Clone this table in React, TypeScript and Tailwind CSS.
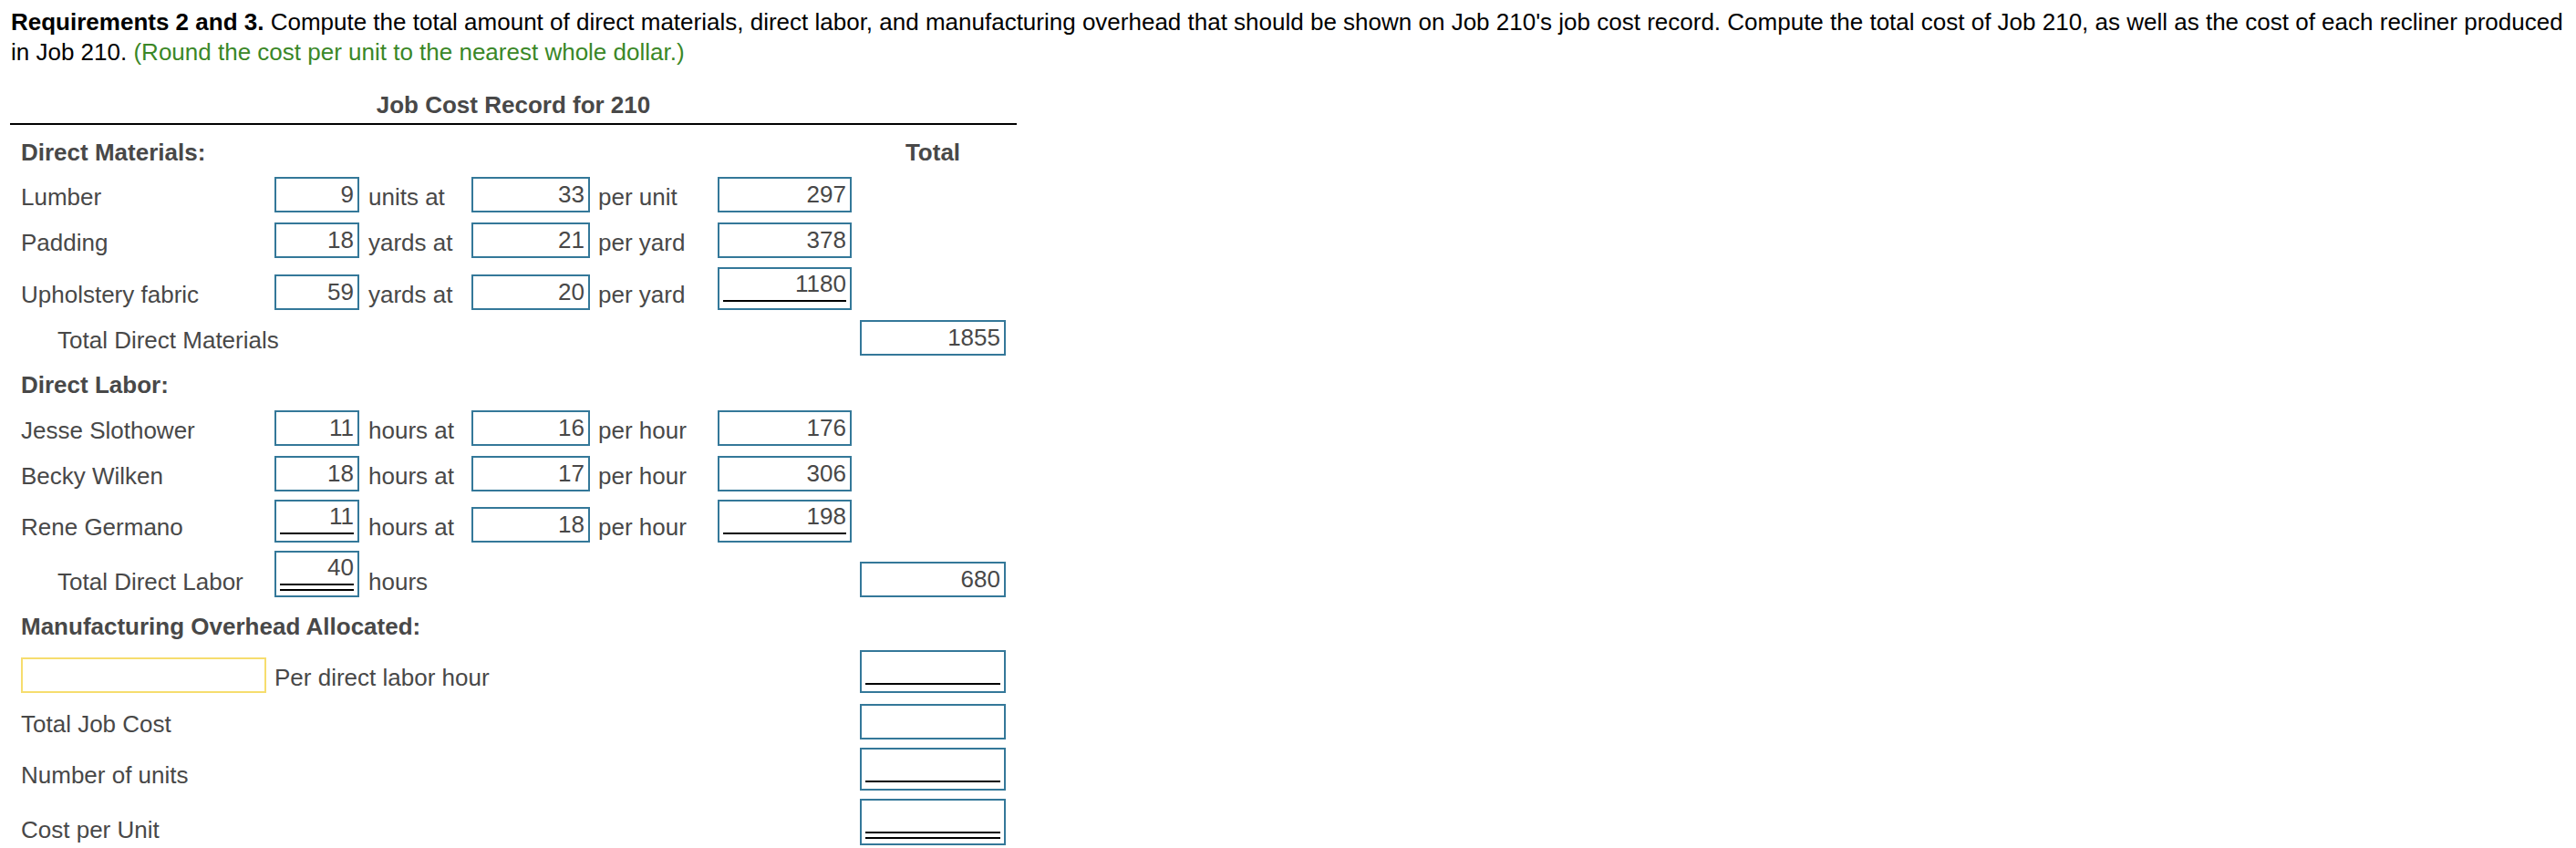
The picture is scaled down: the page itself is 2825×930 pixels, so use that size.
import clsx from 'clsx'

const grid = 'grid grid-cols-[278px_93px_123px_130px_140px_147px_9px_160px] items-end'

type BoxProps = {
  value?: string
  line?: 0 | 1 | 2
  tone?: 'blue' | 'yellow'
  className?: string
}

function Box({ value, line = 0, tone = 'blue', className }: BoxProps) {
  return (
    <div
      className={clsx(
        'flex flex-col justify-end border-2 bg-white px-[4px]',
        tone === 'blue' ? 'border-[#347899]' : 'border-[#f6dd6e]',
        line === 0 && 'h-[39px] pb-[5px]',
        line === 1 && 'h-[47px] pb-[7px]',
        line === 2 && 'h-[51px] pb-[5px]',
        className
      )}
    >
      {value !== undefined && <div className="text-right leading-none">{value}</div>}
      {line >= 1 && <div className="mt-[5px] h-[2px] bg-black" />}
      {line === 2 && <div className="mt-[4px] h-[2px] bg-black" />}
    </div>
  )
}

function Label({ children, className }: { children: React.ReactNode; className?: string }) {
  return <div className={clsx('pb-[4px] leading-none whitespace-nowrap', className)}>{children}</div>
}

type Line = {
  name: string
  qty: string
  qtyLabel: string
  rate: string
  rateLabel: string
  cost: string
  last?: boolean
}

const materials: Line[] = [
  { name: 'Lumber', qty: '9', qtyLabel: 'units at', rate: '33', rateLabel: 'per unit', cost: '297' },
  { name: 'Padding', qty: '18', qtyLabel: 'yards at', rate: '21', rateLabel: 'per yard', cost: '378' },
  { name: 'Upholstery fabric', qty: '59', qtyLabel: 'yards at', rate: '20', rateLabel: 'per yard', cost: '1180', last: true },
]

const labor: Line[] = [
  { name: 'Jesse Slothower', qty: '11', qtyLabel: 'hours at', rate: '16', rateLabel: 'per hour', cost: '176' },
  { name: 'Becky Wilken', qty: '18', qtyLabel: 'hours at', rate: '17', rateLabel: 'per hour', cost: '306' },
  { name: 'Rene Germano', qty: '11', qtyLabel: 'hours at', rate: '18', rateLabel: 'per hour', cost: '198', last: true },
]

function CostRow({ row, qtyLine, className }: { row: Line; qtyLine: boolean; className?: string }) {
  return (
    <div className={clsx(grid, className)}>
      <Label>{row.name}</Label>
      <Box value={row.qty} line={qtyLine && row.last ? 1 : 0} />
      <Label className="pl-[10px]">{row.qtyLabel}</Label>
      <Box value={row.rate} />
      <Label className="pl-[9px]">{row.rateLabel}</Label>
      <Box value={row.cost} line={row.last ? 1 : 0} />
      <div />
      <div />
    </div>
  )
}

export default function App() {
  const gaps = ['mt-[14px]', 'mt-[11px]', 'mt-[10px]']
  const laborGaps = ['mt-[15px]', 'mt-[11px]', 'mt-[9px]']

  return (
    <div className="min-h-[930px] bg-white font-['Liberation_Sans',Arial,sans-serif] text-[26px]">
      <p className="pt-[8px] pl-3 pr-[4px] leading-[33px] text-black">
        <b>Requirements 2 and 3.</b> Compute the total amount of direct materials, direct labor, and manufacturing
        overhead that should be shown on Job 210's job cost record. Compute the total cost of Job 210, as well as the
        cost of each recliner produced in Job 210.{' '}
        <span className="text-[#3a8727]">(Round the cost per unit to the nearest whole dollar.)</span>
      </p>

      <div className="ml-[11px] w-[1104px] text-[#484848]">
        <div className="mt-[28px] text-center font-bold leading-none">Job Cost Record for 210</div>
        <div className="mt-[7px] h-[2px] bg-black" />

        <div className="pl-[12px]">
          {/* Direct materials */}
          <div className={clsx(grid, 'mt-[17px]')}>
            <div className="col-span-7 font-bold leading-none">Direct Materials:</div>
            <div className="text-center font-bold leading-none">Total</div>
          </div>
          {materials.map((row, i) => (
            <CostRow key={row.name} row={row} qtyLine={false} className={gaps[i]} />
          ))}
          <div className={clsx(grid, 'mt-[11px]')}>
            <Label className="col-span-7 pl-[40px]">Total Direct Materials</Label>
            <Box value="1855" />
          </div>

          {/* Direct labor */}
          <div className="mt-[19px] font-bold leading-none">Direct Labor:</div>
          {labor.map((row, i) => (
            <CostRow key={row.name} row={row} qtyLine className={laborGaps[i]} />
          ))}
          <div className={clsx(grid, 'mt-[9px]')}>
            <Label className="pl-[40px]">Total Direct Labor</Label>
            <Box value="40" line={2} />
            <Label className="col-span-5 pl-[10px]">hours</Label>
            <Box value="680" />
          </div>

          {/* Overhead */}
          <div className="mt-[19px] font-bold leading-none">Manufacturing Overhead Allocated:</div>
          <div className={clsx(grid, 'mt-[13px]')}>
            <div className="pr-[9px]">
              <Box tone="yellow" />
            </div>
            <Label className="col-span-6">Per direct labor hour</Label>
            <Box line={1} />
          </div>
          <div className={clsx(grid, 'mt-[12px]')}>
            <Label className="col-span-7">Total Job Cost</Label>
            <Box />
          </div>
          <div className={clsx(grid, 'mt-[9px]')}>
            <Label className="col-span-7">Number of units</Label>
            <Box line={1} />
          </div>
          <div className={clsx(grid, 'mt-[9px]')}>
            <Label className="col-span-7">Cost per Unit</Label>
            <Box line={2} />
          </div>
        </div>
      </div>
    </div>
  )
}
